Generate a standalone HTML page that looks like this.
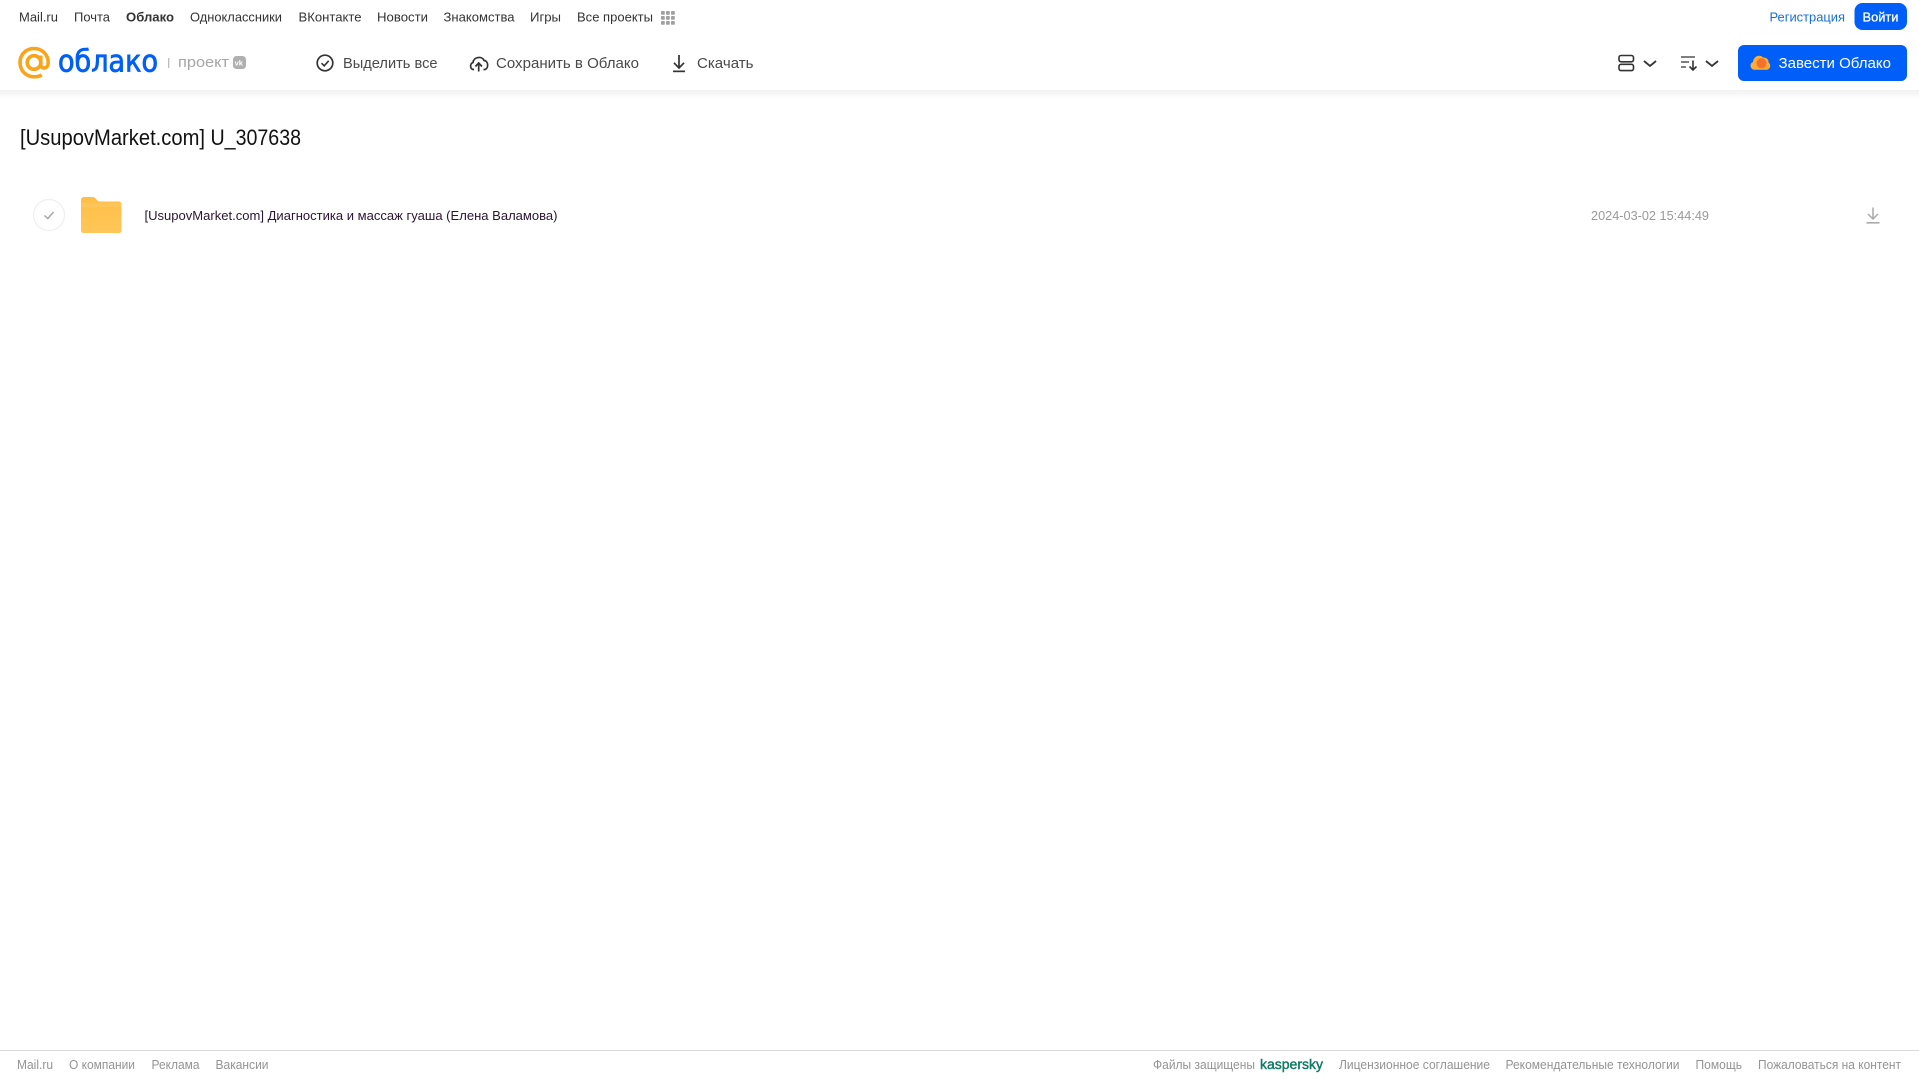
<!DOCTYPE html>
<html lang="ru">
<head>
<meta charset="utf-8">
<title>Облако</title>
<style>
html,body{margin:0;padding:0;background:#fff;width:1919px;height:1079px;overflow:hidden}
svg{display:block;position:absolute;left:0;top:0}
text{font-family:"Liberation Sans","DejaVu Sans",sans-serif}
.n{font-size:13px;fill:#333}
.m{font-size:14.5px;fill:#4a4a4a}
.f{font-size:12.5px;fill:#949494}
</style>
</head>
<body>
<svg width="1919" height="1079" viewBox="0 0 1919 1079" xmlns="http://www.w3.org/2000/svg">
<defs>
<linearGradient id="sh" x1="0" y1="0" x2="0" y2="1"><stop offset="0" stop-color="#f1f1f1"/><stop offset="1" stop-color="#fff"/></linearGradient>
<linearGradient id="fo" x1="0" y1="0" x2="0" y2="1"><stop offset="0" stop-color="#ffbe47"/><stop offset="1" stop-color="#ffc758"/></linearGradient>
</defs>
<rect width="1919" height="1079" fill="#fff"/>
<rect x="0" y="90" width="1919" height="9" fill="url(#sh)"/>

<!-- top nav -->
<g class="n">
<text class="n" x="19" y="21.5" font-size="13" textLength="39" lengthAdjust="spacingAndGlyphs">Mail.ru</text>
<text class="n" x="74" y="21.5" textLength="36" lengthAdjust="spacingAndGlyphs">Почта</text>
<text class="n" x="126" y="21.5" textLength="48" lengthAdjust="spacingAndGlyphs" font-weight="700">Облако</text>
<text class="n" x="190" y="21.5" textLength="92" lengthAdjust="spacingAndGlyphs">Одноклассники</text>
<text class="n" x="298.5" y="21.5" textLength="63" lengthAdjust="spacingAndGlyphs">ВКонтакте</text>
<text class="n" x="377" y="21.5" textLength="51" lengthAdjust="spacingAndGlyphs">Новости</text>
<text class="n" x="443.5" y="21.5" textLength="71" lengthAdjust="spacingAndGlyphs">Знакомства</text>
<text class="n" x="530" y="21.5" textLength="31" lengthAdjust="spacingAndGlyphs">Игры</text>
<text class="n" x="577" y="21.5" textLength="76" lengthAdjust="spacingAndGlyphs">Все проекты</text>
</g>
<g fill="#a0a0a0">
<rect x="661" y="11" width="3.8" height="3.8" rx=".8"/><rect x="666" y="11" width="3.8" height="3.8" rx=".8"/><rect x="671" y="11" width="3.8" height="3.8" rx=".8"/>
<rect x="661" y="16" width="3.8" height="3.8" rx=".8"/><rect x="666" y="16" width="3.8" height="3.8" rx=".8"/><rect x="671" y="16" width="3.8" height="3.8" rx=".8"/>
<rect x="661" y="21" width="3.8" height="3.8" rx=".8"/><rect x="666" y="21" width="3.8" height="3.8" rx=".8"/><rect x="671" y="21" width="3.8" height="3.8" rx=".8"/>
</g>

<text x="1769.5" y="21.5" font-size="13" fill="#1a6fd8" textLength="75.5" lengthAdjust="spacingAndGlyphs">Регистрация</text>
<rect x="1854.5" y="3" width="52.5" height="27" rx="8" fill="#005ff9"/>
<text x="1862.5" y="21.5" font-size="13" fill="#fff" stroke="#fff" stroke-width=".3" textLength="36" lengthAdjust="spacingAndGlyphs">Войти</text>

<!-- logo -->
<g fill="none" stroke="#f9a51c" stroke-width="3.6">
<circle cx="34" cy="62.5" r="6.8"/>
<path d="M40.8 55.5 V64.5 C40.8 69.5 48.2 69.5 48.2 62.5 C48.2 54.5 42 48.5 34 48.5 C26 48.5 20 54.5 20 62.5 C20 70.5 26 76.8 34 76.8 C37 76.8 39.5 76.2 41.8 75"/>
</g>
<text x="58" y="71.5" font-size="30" fill="#005ff9" stroke="#005ff9" stroke-width=".8" style="font-family:'DejaVu Sans',sans-serif" textLength="100" lengthAdjust="spacingAndGlyphs">облако</text>
<rect x="168" y="58" width="1.3" height="10" fill="#bdbdbd"/>
<text x="178" y="67" font-size="14.5" fill="#a6a6a6" textLength="51" lengthAdjust="spacingAndGlyphs">проект</text>
<rect x="233" y="56" width="13" height="13" rx="3.5" fill="#b0b0b0"/>
<text x="234.6" y="65.6" font-size="7.5" fill="#fff" font-weight="700">vk</text>

<!-- toolbar -->
<circle cx="325" cy="63" r="7.8" fill="none" stroke="#333" stroke-width="1.7"/>
<path d="M321.5 63.2 L324.2 65.8 L328.7 60.8" fill="none" stroke="#333" stroke-width="1.6"/>
<text class="m" x="343" y="68" textLength="94.5" lengthAdjust="spacingAndGlyphs">Выделить все</text>

<path d="M474 69.5 H473.5 C470 69.5 469.5 63.5 473 62.5 C473.5 57 482 55.5 484 60.5 C488.5 60.5 489 69 484.5 69.5 H483.5" fill="none" stroke="#333" stroke-width="1.7" stroke-linejoin="round"/>
<path d="M478.7 71.5 V63.5 M475.4 66.5 L478.7 63 L482 66.5" fill="none" stroke="#333" stroke-width="1.7"/>
<text class="m" x="496" y="68" textLength="143" lengthAdjust="spacingAndGlyphs">Сохранить в Облако</text>

<path d="M679 55 V67.5 M674 62.8 L679 68 L684 62.8" fill="none" stroke="#333" stroke-width="1.7"/>
<rect x="673" y="70.5" width="12" height="1.7" fill="#333"/>
<text class="m" x="697" y="68" textLength="56.5" lengthAdjust="spacingAndGlyphs">Скачать</text>

<!-- view controls -->
<rect x="1619" y="55.5" width="14.5" height="6.3" rx="2" fill="none" stroke="#333" stroke-width="1.6"/>
<rect x="1619" y="64.3" width="14.5" height="6.3" rx="2" fill="none" stroke="#333" stroke-width="1.6"/>
<path d="M1644 61 L1650 66 L1656 61" fill="none" stroke="#333" stroke-width="1.8"/>
<path d="M1681 57 H1695 M1681 62 H1689 M1681 67 H1686" stroke="#555" stroke-width="1.4" fill="none"/>
<path d="M1693 60.5 V70 M1689.5 66.5 L1693 70 L1696.5 66.5" stroke="#333" stroke-width="1.6" fill="none"/>
<path d="M1706 61 L1712 66 L1718 61" fill="none" stroke="#333" stroke-width="1.8"/>

<!-- CTA -->
<rect x="1738" y="45" width="169" height="36" rx="6" fill="#005ff9"/>
<path d="M1755 69.8 C1750 69.8 1749 63.5 1753 62 C1753.5 56 1760 54 1763 57.5 C1767 57.5 1769 60 1768.5 62.5 C1771.5 64.5 1770.5 69.8 1766 69.8 Z" fill="#ffac33"/>
<circle cx="1761.5" cy="63.3" r="5" fill="#f4702b"/>
<text x="1778.5" y="68" font-size="14.5" fill="#fff" textLength="112.5" lengthAdjust="spacingAndGlyphs">Завести Облако</text>

<!-- title -->
<text x="20" y="145" font-size="22.5" fill="#111" textLength="185" lengthAdjust="spacingAndGlyphs">[UsupovMarket.com]</text>
<text x="210.5" y="145" font-size="22.5" fill="#111" textLength="90.5" lengthAdjust="spacingAndGlyphs">U_307638</text>

<!-- row -->
<circle cx="49" cy="215" r="15.5" fill="#fff" stroke="#efefef" stroke-width="1.2"/>
<path d="M44.5 215.5 L47.8 218.5 L53.5 212" fill="none" stroke="#a8a8a8" stroke-width="1.5"/>
<path d="M81 200 C81 198 82.5 197 84 197 H92 C94.5 197 95.5 198 96.5 199.5 C97.5 201 98.5 201.5 100 201.5 H118.5 C120.5 201.5 121.5 202.7 121.5 204.5 V230.5 C121.5 232.2 120.5 233 118.5 233 H84 C82.2 233 81 232.2 81 230.5 Z" fill="url(#fo)"/>
<rect x="81" y="203" width="40.5" height="4" fill="#ffca66" opacity=".5"/>
<text x="144.5" y="220" font-size="13" fill="#2a1533" textLength="413" lengthAdjust="spacingAndGlyphs">[UsupovMarket.com] Диагностика и массаж гуаша (Елена Валамова)</text>
<text x="1591" y="220" font-size="13" fill="#999" textLength="118" lengthAdjust="spacingAndGlyphs">2024-03-02 15:44:49</text>
<path d="M1873 207.5 V219 M1868 214 L1873 219 L1878 214" fill="none" stroke="#aaa" stroke-width="1.5"/>
<rect x="1866.5" y="222" width="13" height="1.6" fill="#aaa"/>

<!-- footer -->
<rect x="0" y="1050" width="1919" height="1" fill="#d9d9d9"/>
<text class="f" x="17" y="1069" textLength="36" lengthAdjust="spacingAndGlyphs">Mail.ru</text>
<text class="f" x="69" y="1069" textLength="66" lengthAdjust="spacingAndGlyphs">О компании</text>
<text class="f" x="151.5" y="1069" textLength="48" lengthAdjust="spacingAndGlyphs">Реклама</text>
<text class="f" x="215.5" y="1069" textLength="53" lengthAdjust="spacingAndGlyphs">Вакансии</text>
<text class="f" x="1153" y="1069" textLength="102" lengthAdjust="spacingAndGlyphs">Файлы защищены</text>
<text x="1260" y="1069" font-size="13.5" fill="#0f7a63" stroke="#0f7a63" stroke-width=".4" textLength="63" lengthAdjust="spacingAndGlyphs">kaspersky</text>
<text class="f" x="1339" y="1069" textLength="151" lengthAdjust="spacingAndGlyphs">Лицензионное соглашение</text>
<text class="f" x="1505.5" y="1069" textLength="174" lengthAdjust="spacingAndGlyphs">Рекомендательные технологии</text>
<text class="f" x="1695.5" y="1069" textLength="46.5" lengthAdjust="spacingAndGlyphs">Помощь</text>
<text class="f" x="1758" y="1069" textLength="143" lengthAdjust="spacingAndGlyphs">Пожаловаться на контент</text>
</svg>
</body>
</html>
